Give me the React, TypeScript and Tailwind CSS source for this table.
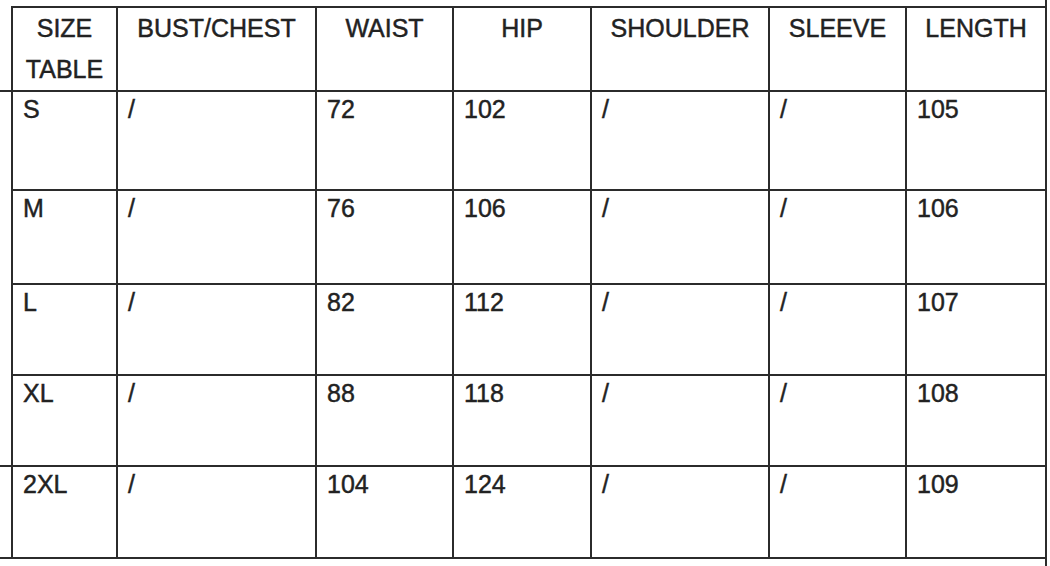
import React from 'react';

const headers = ['BUST/CHEST', 'WAIST', 'HIP', 'SHOULDER', 'SLEEVE', 'LENGTH'];

const rows = [
  { size: 'S', h: 'h-[99px]', stub: false, cells: ['/', '72', '102', '/', '/', '105'] },
  { size: 'M', h: 'h-[94px]', stub: false, cells: ['/', '76', '106', '/', '/', '106'] },
  { size: 'L', h: 'h-[91px]', stub: false, cells: ['/', '82', '112', '/', '/', '107'] },
  { size: 'XL', h: 'h-[91px]', stub: true, cells: ['/', '88', '118', '/', '/', '108'] },
  { size: '2XL', h: 'h-[92px]', stub: true, cells: ['/', '104', '124', '/', '/', '109'] },
];

const line = 'border-[#2b2b2b]';
const cell = `border-2 ${line} align-top text-left pl-[10px] pt-[2px] leading-[30px]`;
const head = `h-[80px] border-2 ${line} p-0 text-center align-top leading-[41px]`;

export default function App() {
  return (
    <div className="h-[566px] w-[1050px] overflow-hidden bg-white text-[25px] text-[#222] [-webkit-text-stroke:0.45px_#222] [font-family:'Liberation_Sans',Arial,sans-serif]">
      <table className="w-[1046px] table-fixed border-collapse">
        <colgroup>
          <col className="w-[12px]" />
          <col className="w-[105px]" />
          <col className="w-[199px]" />
          <col className="w-[137px]" />
          <col className="w-[138px]" />
          <col className="w-[178px]" />
          <col className="w-[137px]" />
          <col className="w-[140px]" />
        </colgroup>
        <tbody>
          {/* top spacer: only the right edge line runs up */}
          <tr>
            <td className="h-[7px] p-0" colSpan={7} />
            <td className={`h-[7px] border-r-2 p-0 ${line}`} />
          </tr>

          {/* header */}
          <tr>
            <td className={`border-b-2 p-0 ${line}`} />
            <td className={head}>
              SIZE
              <br />
              TABLE
            </td>
            {headers.map((h) => (
              <td key={h} className={head}>
                {h}
              </td>
            ))}
          </tr>

          {rows.map((r) => (
            <tr key={r.size}>
              <td className={`p-0 ${r.stub ? `border-b-2 ${line}` : ''}`} />
              <td className={`${r.h} ${cell}`}>{r.size}</td>
              {r.cells.map((c, i) => (
                <td key={i} className={`${r.h} ${cell}`}>
                  {c}
                </td>
              ))}
            </tr>
          ))}

          {/* bottom spacer */}
          <tr>
            <td className="h-[9px] p-0" colSpan={7} />
            <td className={`h-[9px] border-r-2 p-0 ${line}`} />
          </tr>
        </tbody>
      </table>
    </div>
  );
}
